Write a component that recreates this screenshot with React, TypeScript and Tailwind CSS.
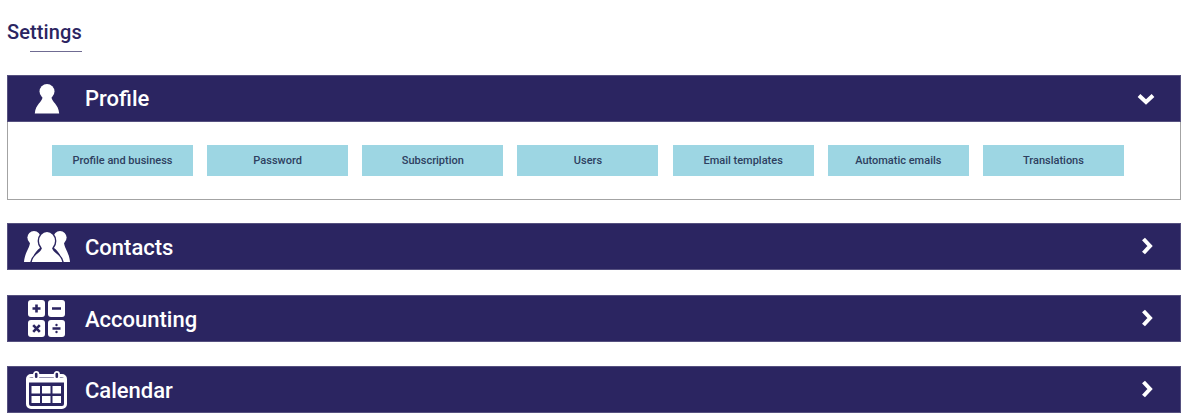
import type { ReactNode } from "react";

const links = ["Profile and business", "Password", "Subscription", "Users", "Email templates", "Automatic emails", "Translations"];

function ProfileIcon() {
  return (
    <svg viewBox="0 0 26 30" className="w-[26px] h-[30px]" fill="#fff">
      <ellipse cx="13" cy="7.5" rx="7.5" ry="7.5" />
      <path d="M8.5 13 C8.5 18 1.5 20 0.8 29.5 L25.2 29.5 C24.5 20 17.5 18 17.5 13 Z" />
    </svg>
  );
}

function ContactsIcon() {
  return (
    <svg viewBox="0 0 46 31" className="w-[46px] h-[31px]" fill="#fff">
      <circle cx="10" cy="6.6" r="6.6" />
      <circle cx="36" cy="6.6" r="6.6" />
      <path d="M6 11 C6 17 0.8 21 0 31 L8 31 C9 24 12 20 16 17 L15 11 Z" />
      <path d="M40 11 C40 17 45.2 21 46 31 L38 31 C37 24 34 20 30 17 L31 11 Z" />
      {/* dark halo first so head and body of the middle figure merge */}
      <ellipse cx="23" cy="10" rx="9.4" ry="10.2" fill="#2b2561" />
      <path d="M18 17 C18 22 8.5 23 7.6 32 L38.4 32 C37.5 23 28 22 28 17 Z" fill="#2b2561" stroke="#2b2561" strokeWidth="3" />
      <ellipse cx="23" cy="10" rx="8" ry="9" />
      <path d="M18 16 C18 22 8.5 23 7.6 32 L38.4 32 C37.5 23 28 22 28 16 Z" />
    </svg>
  );
}

function AccountingIcon() {
  return (
    <svg viewBox="0 0 37 37" className="w-[37px] h-[37px]">
      <rect x="0" y="0" width="17" height="17" rx="3" fill="#fff" />
      <rect x="20" y="0" width="17" height="17" rx="3" fill="#fff" />
      <rect x="0" y="20" width="17" height="17" rx="3" fill="#fff" />
      <rect x="20" y="20" width="17" height="17" rx="3" fill="#fff" />
      <path d="M8.5 4.5v8M4.5 8.5h8M24 8.5h9M5.2 25.2l6.6 6.6M11.8 25.2l-6.6 6.6M24.5 28.5h8" stroke="#2b2561" strokeWidth="2.6" fill="none" />
      <circle cx="28.5" cy="25" r="1.2" fill="#2b2561" />
      <circle cx="28.5" cy="32" r="1.2" fill="#2b2561" />
    </svg>
  );
}

function CalendarIcon() {
  return (
    <svg viewBox="0 0 41 38" className="w-[41px] h-[38px]" fill="none">
      <rect x="1.5" y="4.5" width="38" height="32" rx="3.5" stroke="#fff" strokeWidth="3" />
      <path d="M1.5 9h38" stroke="#fff" strokeWidth="5" />
      <rect x="8" y="0.9" width="4.4" height="7" rx="2.2" fill="#2b2561" stroke="#fff" strokeWidth="1.8" />
      <rect x="28.6" y="0.9" width="4.4" height="7" rx="2.2" fill="#2b2561" stroke="#fff" strokeWidth="1.8" />
      <g fill="#fff">
        <rect x="5.5" y="15" width="8.5" height="7.5" />
        <rect x="16" y="15" width="8.5" height="7.5" />
        <rect x="26.5" y="15" width="8.5" height="7.5" />
        <rect x="5.5" y="25" width="8.5" height="7" />
        <rect x="16" y="25" width="8.5" height="7" />
        <rect x="26.5" y="25" width="8.5" height="7" />
      </g>
    </svg>
  );
}

function SectionHeader({ icon, title, open }: { icon: ReactNode; title: string; open?: boolean }) {
  return (
    <div className="h-[47px] bg-[#2b2561] flex items-center border border-[#55507f]">
      <div className="w-[77px] flex justify-center shrink-0">{icon}</div>
      <span className={`text-[22px] font-medium text-white leading-none ${open ? "" : "pt-[2px]"}`}>{title}</span>
      {open ? (
        <svg viewBox="0 0 18 12" className="ml-auto mr-[25px] w-[18px] h-[12px]" fill="none">
          <path d="M2 2.5 L9 9 L16 2.5" stroke="#fff" strokeWidth="4" />
        </svg>
      ) : (
        <svg viewBox="0 0 12 18" className="ml-auto mr-[27px] mb-[2px] w-[12px] h-[18px]" fill="none">
          <path d="M2.5 2 L9 9 L2.5 16" stroke="#fff" strokeWidth="4" />
        </svg>
      )}
    </div>
  );
}

export default function App() {
  return (
    <div className="w-[1200px] h-[414px] overflow-hidden bg-white px-[7px] font-['Roboto',sans-serif]">
      <div className="pt-[20px] h-[75px]">
        <h1 className="text-[20px] font-medium leading-[24px] tracking-[0.12px] text-[#2b2561]">Settings</h1>
        <div className="mt-[7px] ml-[23px] w-[52px] h-px bg-[#6f6b92]" />
      </div>
      <div className="w-[1174px]">
        <SectionHeader icon={<ProfileIcon />} title="Profile" open />
        <div className="h-[78px] border border-t-0 border-[#a3a3a3] pt-[23px] pl-[44px] flex gap-[14.17px]">
          {links.map((label) => (
            <div key={label} className="w-[141px] h-[31px] pt-[2px] bg-[#9dd6e3] flex items-center justify-center text-[11px] font-medium text-[#2d4060]">
              {label}
            </div>
          ))}
        </div>
        <div className="mt-[23px]">
          <SectionHeader icon={<ContactsIcon />} title="Contacts" />
        </div>
        <div className="mt-[25px]">
          <SectionHeader icon={<AccountingIcon />} title="Accounting" />
        </div>
        <div className="mt-[24px]">
          <SectionHeader icon={<CalendarIcon />} title="Calendar" />
        </div>
      </div>
    </div>
  );
}
